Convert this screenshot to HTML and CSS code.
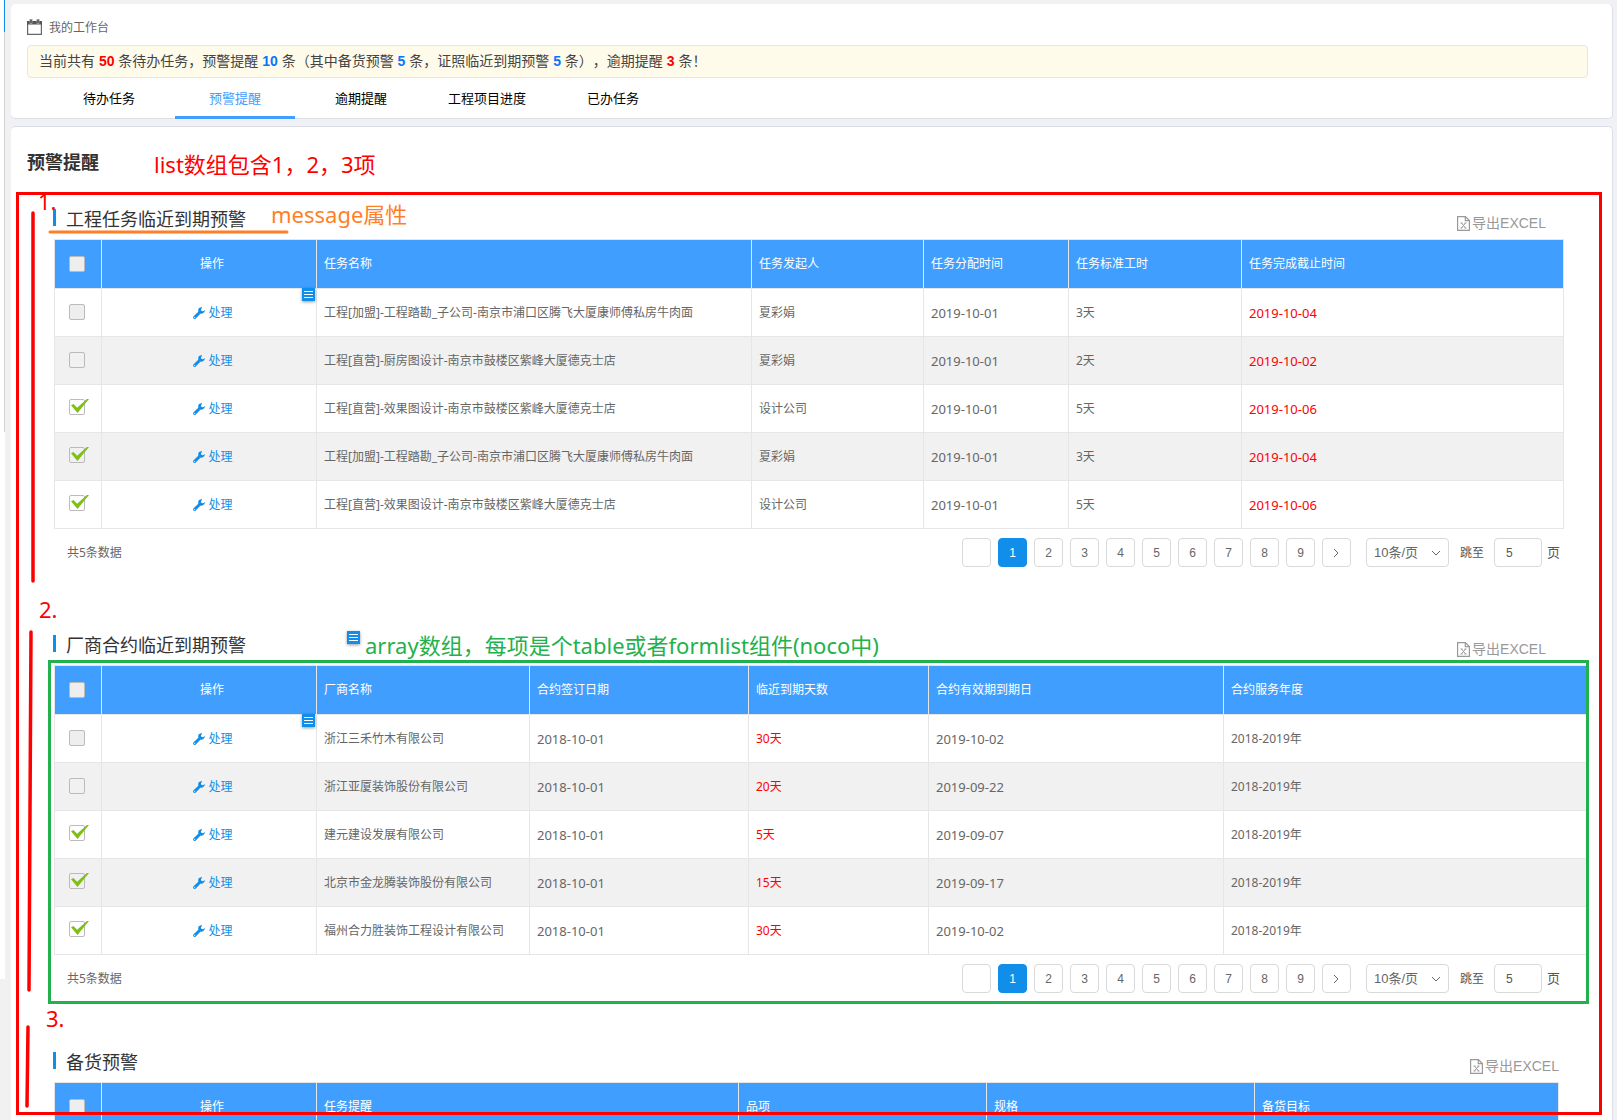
FILE: index.html
```html
<!DOCTYPE html>
<html lang="zh-CN">
<head>
<meta charset="utf-8">
<title>我的工作台</title>
<link rel="stylesheet" href="styles.css">
</head>
<body>
<svg class="sprite" aria-hidden="true">
  <symbol id="wrench" viewBox="0 0 12 12"><path d="M11.800 3 10 4.200 8.300 3.700 7.900 2.300 9.300.500C7.200-.1 5.400 1.200 5.200 3L5.300 4.700.600 9.200C-.2 10-.1 11 .5 11.500 1.200 12.200 2.100 12.100 2.800 11.400L7.300 6.700C9.500 7.200 12 5.600 11.800 3ZM1.700 9.700a.6.6 0 1 1 0 1.200.6.6 0 0 1 0-1.200Z" fill="currentColor" fill-rule="evenodd"/></symbol>
  <symbol id="excel" viewBox="0 0 13 15"><path d="M.6.600h7.800l4 4v9.800H.6zM8.300.600v4h4.100" fill="none" stroke="currentColor" stroke-width="1.200"/><path d="M4.500 7l4 5M8.500 7l-4 5M3.500 7h2M7.500 7h2M3.500 12h2M7.500 12h2" fill="none" stroke="currentColor"/></symbol>
  <symbol id="menu" viewBox="0 0 13 13"><path d="M2 3.500h9M2 6.500h9M2 9.500h9" stroke="#fff" fill="none"/></symbol>
  <symbol id="down" viewBox="0 0 10 10"><path d="M1 3l4 4 4-4" fill="none" stroke="currentColor"/></symbol>
</svg>
<aside class="rail"></aside>
<main class="main">
  <header class="card top">
    <div class="crumb">
      <svg width="15" height="17" viewBox="0 0 15 17"><path d="M.600 3h13.800v12.400H.600z" fill="none" stroke="#666" stroke-width="1.200"/><path d="M0 2h15v3.500H0z" fill="#555"/><path d="M4 0v4M11 0v4" stroke="#999" stroke-width="3" stroke-linecap="round"/><path d="M4 1v3M11 1v3" stroke="#555" stroke-width="1.500"/></svg>
      <span>我的工作台</span>
    </div>
    <p class="notice">当前共有 <b class="bad">50</b> 条待办任务，预警提醒 <b>10</b> 条（其中备货预警 <b>5</b> 条，证照临近到期预警 <b>5</b> 条），逾期提醒 <b class="bad">3</b> 条！</p>
    <nav class="tabs">
      <a href="#">待办任务</a><a href="#" class="on">预警提醒</a><a href="#">逾期提醒</a><a href="#">工程项目进度</a><a href="#">已办任务</a>
    </nav>
  </header>

  <div class="card body">
    <h1>预警提醒</h1>

    <section class="block">
      <div class="head"><h2>工程任务临近到期预警</h2><button class="export"><svg width="13" height="15"><use href="#excel"/></svg>导出EXCEL</button></div>
      <table class="grid">
        <colgroup><col class="c-check"><col class="c-op"><col class="c-435"><col class="c-172"><col class="c-145"><col class="c-173"><col></colgroup>
        <thead><tr><th><input type="checkbox" aria-label="全选"></th><th class="op">操作</th><th>任务名称</th><th>任务发起人</th><th>任务分配时间</th><th>任务标准工时</th><th>任务完成截止时间</th></tr></thead>
        <tbody>
          <tr><td><input type="checkbox" aria-label="选择"></td><td class="op"><a href="#"><svg width="12" height="12"><use href="#wrench"/></svg>处理</a><svg class="badge" width="13" height="13"><use href="#menu"/></svg></td><td>工程[加盟]-工程踏勘_子公司-南京市浦口区腾飞大厦康师傅私房牛肉面</td><td>夏彩娟</td><td class="date">2019-10-01</td><td>3天</td><td class="date bad">2019-10-04</td></tr>
          <tr><td><input type="checkbox" aria-label="选择"></td><td class="op"><a href="#"><svg width="12" height="12"><use href="#wrench"/></svg>处理</a></td><td>工程[直营]-厨房图设计-南京市鼓楼区紫峰大厦德克士店</td><td>夏彩娟</td><td class="date">2019-10-01</td><td>2天</td><td class="date bad">2019-10-02</td></tr>
          <tr><td><input type="checkbox" aria-label="选择" checked></td><td class="op"><a href="#"><svg width="12" height="12"><use href="#wrench"/></svg>处理</a></td><td>工程[直营]-效果图设计-南京市鼓楼区紫峰大厦德克士店</td><td>设计公司</td><td class="date">2019-10-01</td><td>5天</td><td class="date bad">2019-10-06</td></tr>
          <tr><td><input type="checkbox" aria-label="选择" checked></td><td class="op"><a href="#"><svg width="12" height="12"><use href="#wrench"/></svg>处理</a></td><td>工程[加盟]-工程踏勘_子公司-南京市浦口区腾飞大厦康师傅私房牛肉面</td><td>夏彩娟</td><td class="date">2019-10-01</td><td>3天</td><td class="date bad">2019-10-04</td></tr>
          <tr><td><input type="checkbox" aria-label="选择" checked></td><td class="op"><a href="#"><svg width="12" height="12"><use href="#wrench"/></svg>处理</a></td><td>工程[直营]-效果图设计-南京市鼓楼区紫峰大厦德克士店</td><td>设计公司</td><td class="date">2019-10-01</td><td>5天</td><td class="date bad">2019-10-06</td></tr>
        </tbody>
      </table>
      <div class="foot">
        <span class="total">共5条数据</span>
        <div class="pages"><button aria-label="上一页"></button><button class="on">1</button><button>2</button><button>3</button><button>4</button><button>5</button><button>6</button><button>7</button><button>8</button><button>9</button><button aria-label="下一页"><svg class="next" width="10" height="10"><use href="#down"/></svg></button></div>
        <span class="size"><select aria-label="每页条数"><option>10条/页</option></select><svg width="10" height="10"><use href="#down"/></svg></span>
        <label class="jump">跳至<input type="text" value="5"><span>页</span></label>
      </div>
    </section>

    <section class="block second">
      <div class="head"><h2>厂商合约临近到期预警</h2><button class="export"><svg width="13" height="15"><use href="#excel"/></svg>导出EXCEL</button></div>
      <table class="grid">
        <colgroup><col class="c-check"><col class="c-op"><col class="c-213"><col class="c-219"><col class="c-180"><col class="c-295"><col></colgroup>
        <thead><tr><th><input type="checkbox" aria-label="全选"></th><th class="op">操作</th><th>厂商名称</th><th>合约签订日期</th><th>临近到期天数</th><th>合约有效期到期日</th><th>合约服务年度</th></tr></thead>
        <tbody>
          <tr><td><input type="checkbox" aria-label="选择"></td><td class="op"><a href="#"><svg width="12" height="12"><use href="#wrench"/></svg>处理</a><svg class="badge" width="13" height="13"><use href="#menu"/></svg></td><td>浙江三禾竹木有限公司</td><td class="date">2018-10-01</td><td class="bad">30天</td><td class="date">2019-10-02</td><td>2018-2019年</td></tr>
          <tr><td><input type="checkbox" aria-label="选择"></td><td class="op"><a href="#"><svg width="12" height="12"><use href="#wrench"/></svg>处理</a></td><td>浙江亚厦装饰股份有限公司</td><td class="date">2018-10-01</td><td class="bad">20天</td><td class="date">2019-09-22</td><td>2018-2019年</td></tr>
          <tr><td><input type="checkbox" aria-label="选择" checked></td><td class="op"><a href="#"><svg width="12" height="12"><use href="#wrench"/></svg>处理</a></td><td>建元建设发展有限公司</td><td class="date">2018-10-01</td><td class="bad">5天</td><td class="date">2019-09-07</td><td>2018-2019年</td></tr>
          <tr><td><input type="checkbox" aria-label="选择" checked></td><td class="op"><a href="#"><svg width="12" height="12"><use href="#wrench"/></svg>处理</a></td><td>北京市金龙腾装饰股份有限公司</td><td class="date">2018-10-01</td><td class="bad">15天</td><td class="date">2019-09-17</td><td>2018-2019年</td></tr>
          <tr><td><input type="checkbox" aria-label="选择" checked></td><td class="op"><a href="#"><svg width="12" height="12"><use href="#wrench"/></svg>处理</a></td><td>福州合力胜装饰工程设计有限公司</td><td class="date">2018-10-01</td><td class="bad">30天</td><td class="date">2019-10-02</td><td>2018-2019年</td></tr>
        </tbody>
      </table>
      <div class="foot">
        <span class="total">共5条数据</span>
        <div class="pages"><button aria-label="上一页"></button><button class="on">1</button><button>2</button><button>3</button><button>4</button><button>5</button><button>6</button><button>7</button><button>8</button><button>9</button><button aria-label="下一页"><svg class="next" width="10" height="10"><use href="#down"/></svg></button></div>
        <span class="size"><select aria-label="每页条数"><option>10条/页</option></select><svg width="10" height="10"><use href="#down"/></svg></span>
        <label class="jump">跳至<input type="text" value="5"><span>页</span></label>
      </div>
    </section>

    <section class="block third">
      <div class="head"><h2>备货预警</h2><button class="export"><svg width="13" height="15"><use href="#excel"/></svg>导出EXCEL</button></div>
      <table class="grid">
        <colgroup><col class="c-check"><col class="c-op"><col class="c-422"><col class="c-248"><col class="c-268"><col></colgroup>
        <thead><tr><th><input type="checkbox" aria-label="全选"></th><th class="op">操作</th><th>任务提醒</th><th>品项</th><th>规格</th><th>备货目标</th></tr></thead>
      </table>
    </section>
  </div>
</main>

<!-- Review notes drawn over the page -->
<div class="notes">
  <svg class="strokes" width="300" height="1120">
    <g fill="none" stroke="#f00" stroke-width="3.500" stroke-linecap="round"><path d="M33 213V581"/><path d="M31 632 L29 990"/><path d="M28 1027 L27 1106"/></g>
    <path d="M50 232H287" stroke="#ff7f27" stroke-width="3" stroke-linecap="round"/>
  </svg>
  <span class="note n-list">list数组包含1，2，3项</span>
  <span class="note n-one">1.</span>
  <span class="note n-two">2.</span>
  <span class="note n-three">3.</span>
  <span class="note n-message">message属性</span>
  <span class="note n-array">array数组，每项是个table或者formlist组件(noco中)</span>
  <svg class="badge n-badge" width="13" height="13"><use href="#menu"/></svg>
  <div class="frame red"></div>
  <div class="frame green"></div>
</div>
</body>
</html>
```
FILE: styles.css
```css
* { box-sizing: border-box; }

body {
  position: relative;
  display: flex;
  height: 100vh;
  margin: 0;
  overflow: hidden;
  background: #f1f1f1;
  color: #666;
  font: 12px/18px "Noto Sans", "Noto Sans CJK SC", sans-serif;
}

h1, h2, p { margin: 0; }
a { color: inherit; text-decoration: none; }
button, input, select { margin: 0; font: inherit; color: inherit; }
.sprite { position: absolute; width: 0; height: 0; }

.rail {
  flex: none;
  width: 5px;
  height: 979px;
  background: linear-gradient(#108ee9 0 32px, #d4d4d4 32px 432px, #fff 432px) right / 1px 100% no-repeat #fff;
}

.main {
  flex: 1;
  display: flex;
  flex-direction: column;
  gap: 7px;
  margin: 4px 0 0 6px;
  padding-right: 4px;
  background: #eff1f6;
}
.card {
  border: 1px solid #dcdfe6;
  border-left: 0;
  border-radius: 5px;
  background: #fff;
}

.top { border-top: 0; padding: 14px 24px 0 16px; }
.crumb { display: flex; align-items: center; gap: 7px; height: 18px; }
.crumb span { padding-top: 2px; }
.notice {
  margin-top: 9px;
  padding: 0 11px;
  border: 1px solid #ebe6d6;
  border-radius: 4px;
  background: #fffbeb;
  color: #444;
  font: 14px/31px "Liberation Sans", "Noto Sans CJK SC", sans-serif;
  text-spacing-trim: space-all;
}
.notice b { color: #0a74ff; }
.notice .bad, .bad { color: #f00; }

.tabs { display: flex; gap: 6px; margin: 0 0 -1px 22px; }
.tabs a {
  width: 120px;
  color: #000;
  font-size: 13px;
  line-height: 41px;
  text-align: center;
}
.tabs .on { color: #409eff; box-shadow: inset 0 -3px #409eff; }

.body { flex: 1; padding-top: 20px; border-bottom: 0; border-radius: 5px 5px 0 0; }
h1 { margin-left: 16px; color: #333; font-size: 18px; line-height: 30px; }

.block { margin: 22px 48px 0 43px; }
.second { margin-top: 58px; margin-right: 23px; }
.third { margin-top: 49px; margin-right: 53px; }

.head { display: flex; align-items: center; height: 40px; }
h2 {
  margin-left: -1px;
  color: #333;
  font-size: 18px;
  font-weight: 400;
  line-height: 40px;
  padding-left: 13px;
  background: linear-gradient(#108ee9, #108ee9) 0 10px / 3px 17px no-repeat;
}
.export {
  display: flex;
  align-items: center;
  gap: 2px;
  margin-left: auto;
  margin-right: 18px;
  padding: 8px 0 0;
  border: 0;
  background: none;
  color: #999;
  font: 14px/20px "Liberation Sans", "Noto Sans CJK SC", sans-serif;
}
.second .export { margin-right: 43px; }
.third .export { margin-right: 0; }

.grid {
  width: 100%;
  table-layout: fixed;
  border: solid #e6e6e6;
  border-width: 1px 0 0 1px;
  border-spacing: 0;
}
.c-check { width: 47px; }
.c-op { width: 215px; }
.c-435 { width: 435px; }
.c-172 { width: 172px; }
.c-145 { width: 145px; }
.c-173 { width: 173px; }
.c-213 { width: 213px; }
.c-219 { width: 219px; }
.c-180 { width: 180px; }
.c-295 { width: 295px; }
.c-422 { width: 422px; }
.c-248 { width: 248px; }
.c-268 { width: 268px; }
.grid th, .grid td {
  height: 48px;
  padding: 0 7px;
  border: solid #e6e6e6;
  border-width: 0 1px 1px 0;
  text-align: left;
  white-space: nowrap;
}
.grid th { height: 49px; background: #409eff; color: #fff; font-weight: 400; }
.grid tr:nth-child(even) td { background: #f1f1f1; }
.grid th:first-child, .grid td:first-child { padding: 0 0 0 14px; }
.grid .op { position: relative; padding-left: 13px; text-align: center; }
.grid td.op { padding: 2px 5px 0 13px; color: #108ee9; }
.op a { display: inline-flex; align-items: center; gap: 3px; }
.grid .date { font-size: 13px; line-height: 16px; }
.badge { background: #108ee9; box-shadow: 0 1px 3px rgba(0, 0, 0, .4); }
.op .badge { position: absolute; top: -1px; right: 1px; }

input[type="checkbox"] {
  appearance: none;
  display: block;
  position: relative;
  width: 16px;
  height: 16px;
  border: 1px solid #bbb;
  border-radius: 2px;
  background: #eee;
}
td input[type="checkbox"] { margin-bottom: 1px; }
tr:nth-child(even) input[type="checkbox"] { background: transparent; }
input[type="checkbox"]:checked { margin-bottom: 3px; background: transparent; }
input[type="checkbox"]:checked::after {
  content: "";
  position: absolute;
  left: 1px;
  top: -1px;
  width: 18px;
  height: 14px;
  background: #7fbf16;
  clip-path: polygon(0 45%, 14% 36%, 34% 62%, 88% 0, 100% 0, 36% 100%);
}

.foot {
  display: flex;
  align-items: center;
  justify-content: flex-end;
  padding: 9px 4px 0 13px;
  font-family: "Liberation Sans", "Noto Sans CJK SC", sans-serif;
}
.second .foot { padding-right: 29px; }
.total { margin-right: auto; font-family: "Noto Sans", "Noto Sans CJK SC", sans-serif; }
.pages { display: flex; gap: 7px; }
.pages button {
  display: grid;
  place-items: center;
  width: 29px;
  height: 29px;
  padding: 0;
  border: 1px solid #d9d9d9;
  border-radius: 4px;
  background: #fff;
}
.pages .on { border-color: #108ee9; background: #108ee9; color: #fff; }
.next { transform: rotate(-90deg); }
.size { position: relative; margin-left: 15px; }
.size select {
  appearance: none;
  display: block;
  width: 83px;
  height: 29px;
  padding: 0 7px;
  border: 1px solid #d9d9d9;
  border-radius: 4px;
  background: #fff;
  font-size: 13px;
}
.size svg { position: absolute; right: 8px; top: 10px; }
.jump { display: flex; align-items: center; margin-left: 11px; color: #555; }
.jump input {
  width: 48px;
  height: 29px;
  margin: 0 5px 0 10px;
  padding: 0 11px;
  border: 1px solid #d9d9d9;
  border-radius: 4px;
  background: #fff;
}
.jump span { font-size: 13px; }

.notes { position: absolute; inset: 0; pointer-events: none; }
.strokes { position: absolute; left: 0; top: 0; }
.note { position: absolute; color: #f00; font-size: 22px; line-height: 30px; white-space: nowrap; }
.n-list { left: 154px; top: 149px; }
.n-one { left: 38px; top: 186px; }
.n-two { left: 39px; top: 594px; }
.n-three { left: 46px; top: 1003px; }
.n-message { left: 271px; top: 199px; color: #ff7f27; }
.n-array { left: 365px; top: 630px; color: #22b14c; }
.n-badge { position: absolute; left: 347px; top: 631px; }
.frame { position: absolute; border: 3px solid #f00; }
.red { left: 16px; right: 15px; top: 192px; bottom: 5px; }
.green { left: 48px; right: 28px; top: 660px; height: 344px; border-color: #22b14c; }
```
